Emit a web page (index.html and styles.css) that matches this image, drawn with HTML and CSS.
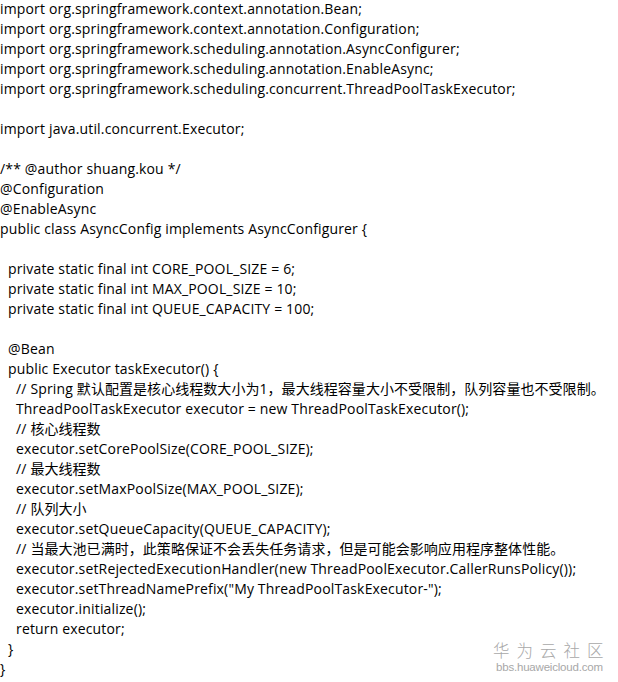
FILE: index.html
```html
<!DOCTYPE html>
<html lang="zh">
<head>
<meta charset="utf-8">
<link rel="stylesheet" href="styles.css">
</head>
<body>
<div class="code">
<div class="ln">import org.springframework.context.annotation.Bean;</div>
<div class="ln">import org.springframework.context.annotation.Configuration;</div>
<div class="ln">import org.springframework.scheduling.annotation.AsyncConfigurer;</div>
<div class="ln">import org.springframework.scheduling.annotation.EnableAsync;</div>
<div class="ln">import org.springframework.scheduling.concurrent.ThreadPoolTaskExecutor;</div>
<div class="ln"></div>
<div class="ln">import java.util.concurrent.Executor;</div>
<div class="ln"></div>
<div class="ln">/** @author shuang.kou */</div>
<div class="ln">@Configuration</div>
<div class="ln">@EnableAsync</div>
<div class="ln">public class AsyncConfig implements AsyncConfigurer {</div>
<div class="ln"></div>
<div class="ln i1">private static final int CORE_POOL_SIZE = 6;</div>
<div class="ln i1">private static final int MAX_POOL_SIZE = 10;</div>
<div class="ln i1">private static final int QUEUE_CAPACITY = 100;</div>
<div class="ln"></div>
<div class="ln i1">@Bean</div>
<div class="ln i1">public Executor taskExecutor() {</div>
<div class="ln i2">// Spring <span class="zh">默认配置是核心线程数大小为1，最大线程容量大小不受限制，队列容量也不受限制。</span></div>
<div class="ln i2">ThreadPoolTaskExecutor executor = new ThreadPoolTaskExecutor();</div>
<div class="ln i2">// <span class="zh">核心线程数</span></div>
<div class="ln i2">executor.setCorePoolSize(CORE_POOL_SIZE);</div>
<div class="ln i2">// <span class="zh">最大线程数</span></div>
<div class="ln i2">executor.setMaxPoolSize(MAX_POOL_SIZE);</div>
<div class="ln i2">// <span class="zh">队列大小</span></div>
<div class="ln i2">executor.setQueueCapacity(QUEUE_CAPACITY);</div>
<div class="ln i2">// <span class="zh">当最大池已满时，此策略保证不会丢失任务请求，但是可能会影响应用程序整体性能。</span></div>
<div class="ln i2">executor.setRejectedExecutionHandler(new ThreadPoolExecutor.CallerRunsPolicy());</div>
<div class="ln i2">executor.setThreadNamePrefix("My ThreadPoolTaskExecutor-");</div>
<div class="ln i2">executor.initialize();</div>
<div class="ln i2">return executor;</div>
<div class="ln i1">}</div>
<div class="ln">}</div>
</div>
<div class="mark">
<div class="mark-cn">华为云社区</div>
<div class="mark-url">bbs.huaweicloud.com</div>
</div>
</body>
</html>
```
FILE: styles.css
```css
html, body {
  margin: 0;
  padding: 0;
  background: #fff;
}
body {
  width: 618px;
  height: 682px;
  overflow: hidden;
  position: relative;
}
.code {
  margin-top: -1px;
  font-family: "Open Sans", "Noto Sans CJK SC", sans-serif;
  font-size: 14px;
  line-height: 20px;
  letter-spacing: 0.16px;
  color: #000;
}
.ln {
  height: 20px;
  white-space: pre;
}
.zh {
  letter-spacing: 0.05px;
}
.i1 { padding-left: 8px; }
.i2 { padding-left: 16px; }
.mark {
  position: absolute;
  left: 493px;
  top: 641px;
  white-space: nowrap;
  color: #a8a8a8;
  font-family: "Noto Sans CJK SC", sans-serif;
}
.mark-cn {
  font-size: 16.5px;
  line-height: 18px;
  letter-spacing: 7px;
  font-weight: 300;
}
.mark-url {
  font-family: "Liberation Sans", sans-serif;
  font-size: 11.5px;
  line-height: 12px;
  margin-top: 2px;
  margin-left: 3px;
  letter-spacing: -0.2px;
}
```
